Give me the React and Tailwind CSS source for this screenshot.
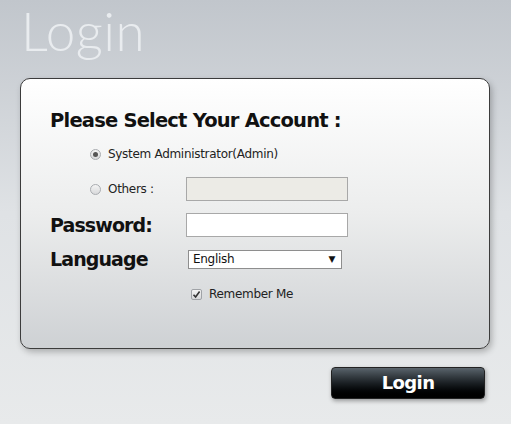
import React, { useState } from 'react';

const Radio = ({ checked }) => (
    <span className="inline-flex items-center justify-center w-[11px] h-[11px] rounded-full border border-[#a9acb0] bg-gradient-to-b from-[#f4f4f4] to-[#d8d9db]">
        {checked && <span className="w-[5px] h-[5px] rounded-full bg-[#555]" />}
    </span>
);

const App = () => {
    const [lang, setLang] = useState('English');

    return (
        <div className="w-[511px] h-[424px] overflow-hidden bg-gradient-to-b from-[#c1c6cc] via-[#dfe2e5] to-[#e8eaeb] font-['Noto_Sans',sans-serif] text-[#111]">
            {/* Page title */}
            <div className="h-[78px] pl-[21px] pt-[1px]">
                <h1 className="text-[53px] leading-[60px] font-light tracking-[0.5px] text-[#e9ecef] font-['Lato',sans-serif]">Login</h1>
            </div>

            {/* Account card */}
            <div className="ml-[20px] w-[470px] h-[271px] rounded-[10px] border border-[#3c3c3c] bg-gradient-to-b from-white via-[#eceded] to-[#ced1d4] shadow-[2px_3px_6px_rgba(0,0,0,0.25)] pl-[29px] pt-[27px]">
                <h2 className="text-[19.5px] leading-[30px] font-bold font-['DejaVu_Sans',sans-serif] tracking-[-0.8px]">Please Select Your Account :</h2>

                <div className="mt-[8px] pl-[40px] text-[12px] text-[#222] font-['DejaVu_Sans',sans-serif] tracking-[-0.3px]">
                    <div className="flex items-center h-[20px] gap-[7px]">
                        <Radio checked />
                        <span>System Administrator(Admin)</span>
                    </div>
                    <div className="flex items-center h-[24px] mt-[13px]">
                        <span className="flex items-center gap-[7px] w-[96px]">
                            <Radio />
                            <span>Others :</span>
                        </span>
                        <input disabled className="w-[162px] h-[24px] border border-[#a8a8a8] bg-[#ecebe6]" />
                    </div>
                </div>

                <div className="flex items-center h-[24px] mt-[12px]">
                    <span className="w-[136px] text-[19px] font-bold font-['DejaVu_Sans',sans-serif] tracking-[-0.9px]">Password:</span>
                    <input type="password" className="w-[162px] h-[24px] border border-[#a8a8a8] bg-white outline-none" />
                </div>

                <div className="flex items-center h-[24px] mt-[10px]">
                    <span className="w-[138px] text-[19px] font-bold font-['DejaVu_Sans',sans-serif] tracking-[-0.9px]">Language</span>
                    <div className="relative w-[154px] h-[19px] border border-[#8e8e8e] bg-white flex items-center pl-[4px] text-[12px] font-['DejaVu_Sans',sans-serif] tracking-[-0.3px]">
                        <span>{lang}</span>
                        <span className="absolute right-[6px] top-[2px] text-[9px]">▼</span>
                        <select value={lang} onChange={e => setLang(e.target.value)} className="absolute inset-0 opacity-0">
                            <option>English</option>
                        </select>
                    </div>
                </div>

                <div className="flex items-center h-[20px] mt-[13px] pl-[141px] gap-[7px] text-[12px] text-[#222] font-['DejaVu_Sans',sans-serif] tracking-[-0.3px]">
                    <span className="w-[11px] h-[11px] border border-[#a0a3a7] rounded-[2px] bg-gradient-to-b from-[#f4f4f4] to-[#d6d7d9] flex items-center justify-center">
                        <svg width="9" height="9" viewBox="0 0 9 9"><path d="M1.5 4.8 L3.6 7 L7.6 1.6" stroke="#333" strokeWidth="1.6" fill="none" /></svg>
                    </span>
                    <span>Remember Me</span>
                </div>
            </div>

            {/* Submit */}
            <div className="flex justify-end pr-[26px] mt-[18px]">
                <button className="w-[154px] h-[32px] rounded-[4px] border border-[#222] bg-gradient-to-b from-[#5a646c] via-[#1b2024] to-black shadow-[1px_2px_4px_rgba(0,0,0,0.35)] text-white text-[18px] font-bold font-['DejaVu_Sans',sans-serif] tracking-[-0.6px] leading-none">
                    Login
                </button>
            </div>
        </div>
    );
};

export default App;
